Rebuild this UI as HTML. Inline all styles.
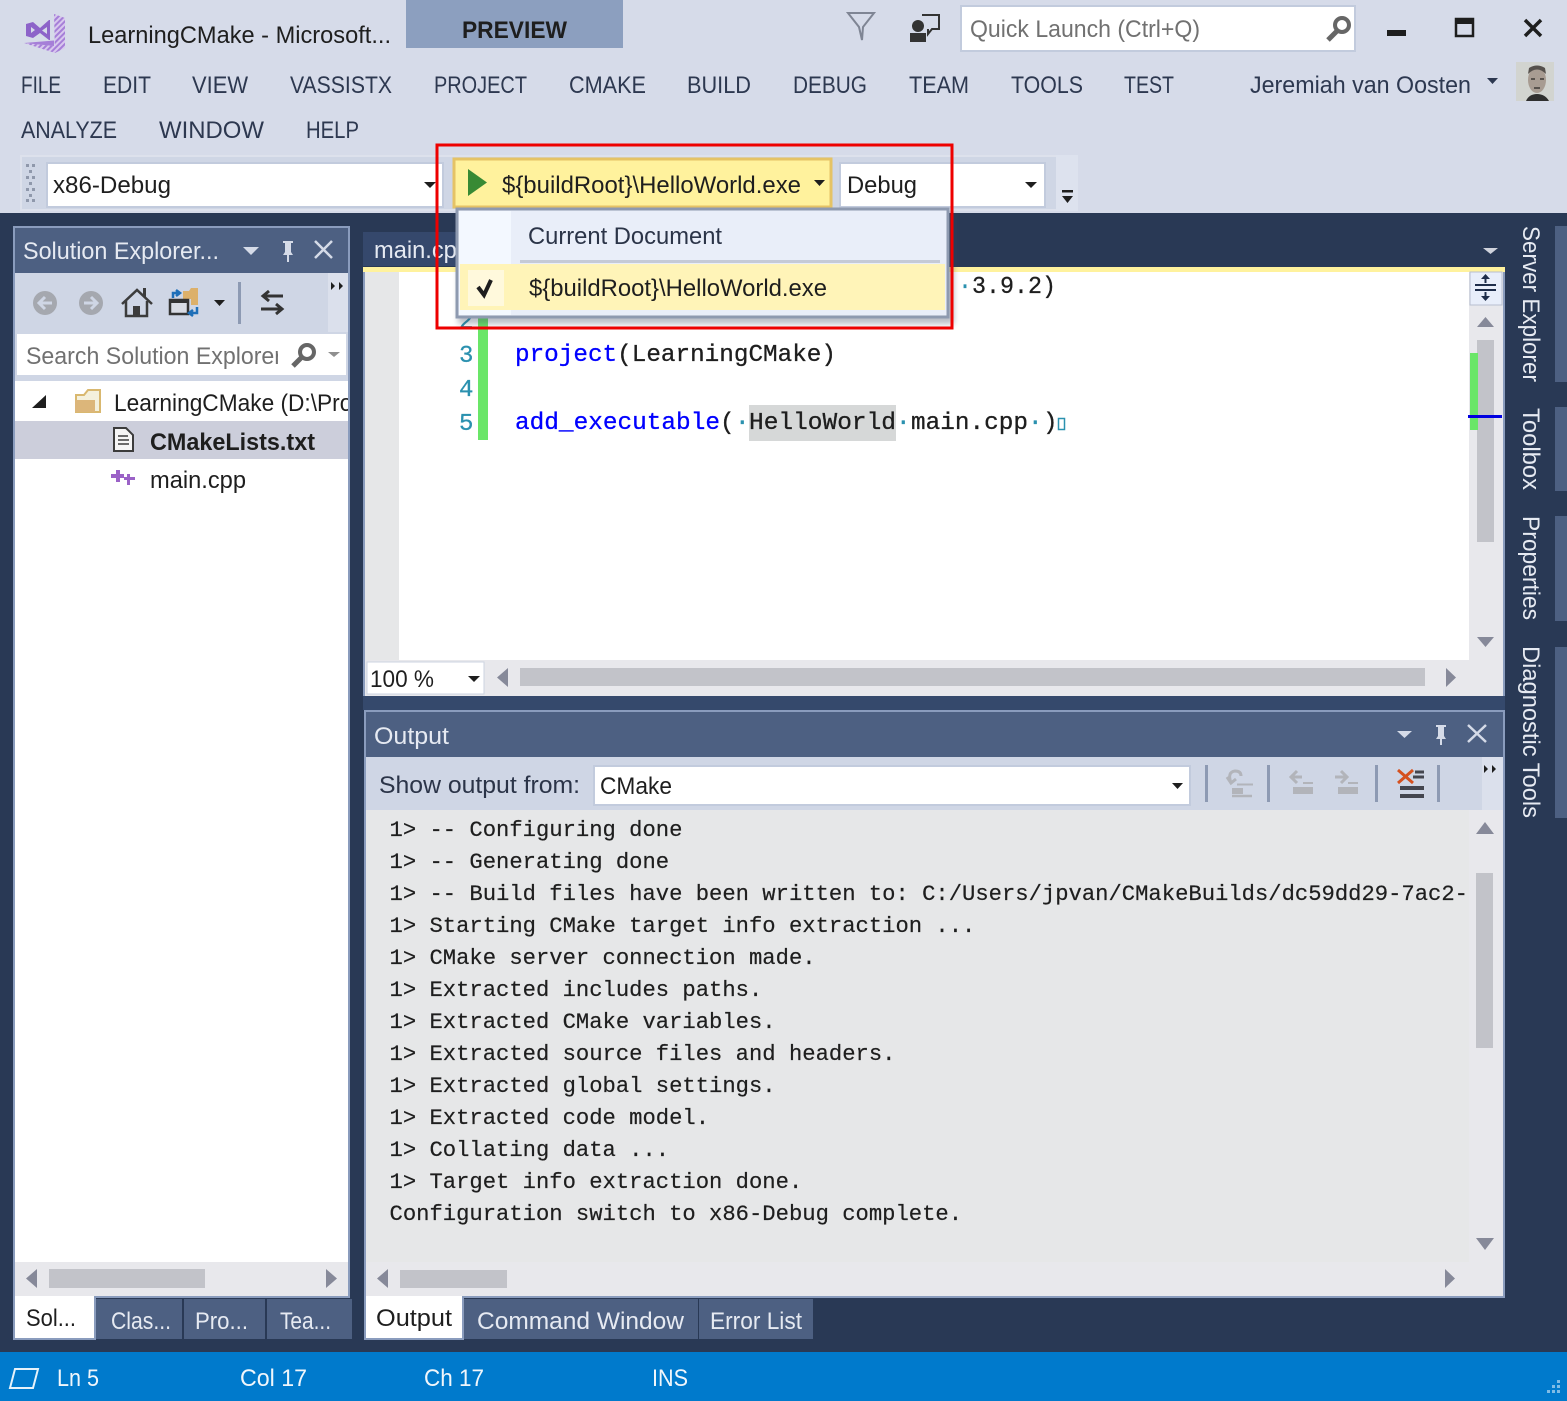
<!DOCTYPE html>
<html><head><meta charset="utf-8"><title>LearningCMake - Microsoft Visual Studio</title>
<style>
html,body{margin:0;padding:0;background:#293955}
svg{display:block;filter:blur(.35px)}
text{font-family:"Liberation Sans",sans-serif;font-size:24px;fill:#1e1e1e;white-space:pre}
.m{fill:#2d3850}
.w{fill:#e6eaf2}
.c{font-family:"Liberation Mono",monospace;font-size:24.3px;fill:#1e1e1e;stroke:#1e1e1e;stroke-width:.3px}
.o{font-family:"Liberation Mono",monospace;font-size:22.2px;fill:#1e1e1e;stroke:#1e1e1e;stroke-width:.2px}
.n{font-family:"Liberation Mono",monospace;font-size:24px;fill:#2b91af;stroke:#2b91af;stroke-width:.3px}
.kw{fill:#0000ff;stroke:#0000ff}
.d{fill:#2b91af;stroke:#2b91af}
.g{fill:#717171}
</style></head><body>
<svg width="1567" height="1401" viewBox="0 0 1567 1401" xmlns="http://www.w3.org/2000/svg">
<defs>
<clipPath id="oc"><rect x="366" y="810" width="1103" height="452"/></clipPath>
<clipPath id="tc"><rect x="15" y="381" width="333" height="40"/></clipPath>
<clipPath id="sc"><rect x="20" y="336" width="258" height="38"/></clipPath>
<filter id="sh" x="-5%" y="-5%" width="110%" height="120%"><feGaussianBlur stdDeviation="3"/></filter>
<pattern id="hat" width="4" height="4" patternUnits="userSpaceOnUse" patternTransform="rotate(45)"><rect width="4" height="4" fill="#d8c8ee"/><rect width="2" height="4" fill="#a67fd8"/></pattern>
</defs>

<rect width="1567" height="1401" fill="#293955"/>
<!-- top chrome -->
<rect width="1567" height="213" fill="#d6dbe9"/>
<!-- VS logo -->
<path fill-rule="evenodd" fill="#8d63c9" d="M26 24L33 22L40 28L49 20L50 20V40L49 40L40 33L33 38L26 36ZM31 27V33L35 30ZM42 30.500L47 34V27Z"/>
<path d="M54 14L65 18V48L55 53Z" fill="url(#hat)"/>
<path d="M24 43L55 46V53Z" fill="url(#hat)"/>
<path d="M24 43L54 40.500V46Z" fill="#a67fd8"/>
<text x="88" y="43" textLength="303" lengthAdjust="spacingAndGlyphs">LearningCMake - Microsoft...</text>
<rect x="406" y="0" width="217" height="48" fill="#8c9fbf"/>
<text x="462" y="38" textLength="105" lengthAdjust="spacingAndGlyphs" style="font-weight:bold">PREVIEW</text>
<path d="M848 13H874L863 27L862 40L859 27Z" fill="none" stroke="#7f8594" stroke-width="2"/>
<circle cx="918" cy="26" r="6" fill="#333"/><path d="M910 42v-9h16v9z" fill="#333"/>
<path d="M922 15h17v14h-7l-4 5v-5" fill="none" stroke="#333" stroke-width="2"/>
<rect x="961" y="6" width="394" height="45" fill="#fff" stroke="#c2cbdd" stroke-width="2"/>
<text class="g" x="970" y="37" textLength="230" lengthAdjust="spacingAndGlyphs">Quick Launch (Ctrl+Q)</text>
<circle cx="1342" cy="25" r="7" fill="none" stroke="#666" stroke-width="4"/><path d="M1337 31l-9 9" stroke="#666" stroke-width="5"/>
<rect x="1387" y="30" width="19" height="6" fill="#1e1e1e"/>
<rect x="1456" y="19" width="17" height="17" fill="none" stroke="#1e1e1e" stroke-width="2.500"/><rect x="1456" y="18" width="18" height="6" fill="#1e1e1e"/>
<path d="M1525 20l16 16M1541 20l-16 16" stroke="#1e1e1e" stroke-width="3.500"/>

<g class="menu">
<text class="m" x="21" y="93" textLength="40" lengthAdjust="spacingAndGlyphs">FILE</text>
<text class="m" x="103" y="93" textLength="48" lengthAdjust="spacingAndGlyphs">EDIT</text>
<text class="m" x="192" y="93" textLength="56" lengthAdjust="spacingAndGlyphs">VIEW</text>
<text class="m" x="290" y="93" textLength="102" lengthAdjust="spacingAndGlyphs">VASSISTX</text>
<text class="m" x="434" y="93" textLength="93" lengthAdjust="spacingAndGlyphs">PROJECT</text>
<text class="m" x="569" y="93" textLength="77" lengthAdjust="spacingAndGlyphs">CMAKE</text>
<text class="m" x="687" y="93" textLength="64" lengthAdjust="spacingAndGlyphs">BUILD</text>
<text class="m" x="793" y="93" textLength="74" lengthAdjust="spacingAndGlyphs">DEBUG</text>
<text class="m" x="909" y="93" textLength="60" lengthAdjust="spacingAndGlyphs">TEAM</text>
<text class="m" x="1011" y="93" textLength="72" lengthAdjust="spacingAndGlyphs">TOOLS</text>
<text class="m" x="1124" y="93" textLength="50" lengthAdjust="spacingAndGlyphs">TEST</text>
<text class="m" x="1250" y="93" textLength="221" lengthAdjust="spacingAndGlyphs">Jeremiah van Oosten</text>
<text class="m" x="21" y="138" textLength="96" lengthAdjust="spacingAndGlyphs">ANALYZE</text>
<text class="m" x="159" y="138" textLength="105" lengthAdjust="spacingAndGlyphs">WINDOW</text>
<text class="m" x="306" y="138" textLength="53" lengthAdjust="spacingAndGlyphs">HELP</text>
</g>
<path d="M1487 78h11l-5.500 6z" fill="#2d3850"/>
<!-- avatar -->
<rect x="1516" y="62" width="38" height="39" fill="#d2d4d0"/>
<ellipse cx="1537" cy="80" rx="9" ry="13" fill="#a89c92"/>
<path d="M1528 74q9-9 18 0l-1-6q-8-5-16 0z" fill="#55504c"/>
<path d="M1531 79h4M1540 79h4M1534 88h6" stroke="#3e3a36" stroke-width="1.500"/>
<path d="M1526 101q3-7 11-7t12 7z" fill="#2f2f2f"/>
<!-- toolbar -->
<rect x="20" y="155" width="1058" height="56" fill="#dde1ec"/>
<rect x="22" y="157" width="1034" height="52" fill="#cfd6e5"/>
<rect x="1056" y="155" width="22" height="56" fill="#dde2ee"/>
<g fill="#8f98ab"><rect x="26" y="164" width="3" height="3"/><rect x="32" y="164" width="3" height="3"/><rect x="29" y="170" width="3" height="3"/><rect x="26" y="176" width="3" height="3"/><rect x="32" y="176" width="3" height="3"/><rect x="29" y="182" width="3" height="3"/><rect x="26" y="188" width="3" height="3"/><rect x="32" y="188" width="3" height="3"/><rect x="29" y="194" width="3" height="3"/><rect x="26" y="199" width="3" height="3"/><rect x="32" y="199" width="3" height="3"/></g>
<rect x="47" y="163" width="396" height="44" fill="#fff" stroke="#c2cbdd" stroke-width="2"/>
<text x="53" y="193" textLength="118" lengthAdjust="spacingAndGlyphs">x86-Debug</text>
<path d="M424 182h12l-6 6z" fill="#1e1e1e"/>
<rect x="454" y="159" width="377" height="48" fill="#fff29d" stroke="#e5c365" stroke-width="3"/>
<path d="M468 169l19 13.500-19 13.500z" fill="#388a34"/>
<text x="502" y="193" textLength="299" lengthAdjust="spacingAndGlyphs">${buildRoot}\HelloWorld.exe</text>
<path d="M814 180h11l-5.500 6z" fill="#1e1e1e"/>
<rect x="840" y="163" width="205" height="44" fill="#fff" stroke="#c2cbdd" stroke-width="2"/>
<text x="847" y="193" textLength="70" lengthAdjust="spacingAndGlyphs">Debug</text>
<path d="M1025 182h12l-6 6z" fill="#1e1e1e"/>
<rect x="1062" y="190" width="11" height="2.500" fill="#1e1e1e"/><path d="M1062 196h11l-5.500 7z" fill="#1e1e1e"/>

<!-- dark bg -->
<rect x="0" y="213" width="1567" height="1139" fill="#293955"/>

<!-- solution explorer -->
<rect x="13" y="226" width="337" height="1072" fill="#8a9cbd"/>
<rect x="15" y="228" width="333" height="45" fill="#4d6082"/>
<text class="w" x="23" y="259" textLength="196" lengthAdjust="spacingAndGlyphs">Solution Explorer...</text>
<path d="M243 247h16l-8 8z" fill="#d5dbe8"/>
<path d="M283 241h10v2h-2v9l2 3h-10l2-3v-9h-2zM287 255h2v7h-2z" fill="#d5dbe8"/>
<path d="M315 241l17 17M332 241l-17 17" stroke="#d5dbe8" stroke-width="2.500"/>
<rect x="15" y="273" width="333" height="59" fill="#cfd6e5"/>
<rect x="328" y="273" width="20" height="59" fill="#dbe0ec"/>
<path d="M331 282l4 4-4 4zM339 282l4 4-4 4z" fill="#1e1e1e"/>
<circle cx="45" cy="303" r="12" fill="#a5a8af"/><path d="M52 303h-12M45 297l-6 6 6 6" stroke="#cfd6e5" stroke-width="3" fill="none"/>
<circle cx="91" cy="303" r="12" fill="#a5a8af"/><path d="M84 303h12M91 297l6 6-6 6" stroke="#cfd6e5" stroke-width="3" fill="none"/>
<path d="M122 304l15-14 15 14M126 301v15h21v-15" fill="none" stroke="#3c3c3c" stroke-width="2.500"/><rect x="133" y="306" width="7" height="10" fill="#3c3c3c"/><rect x="143" y="288" width="3" height="9" fill="#3c3c3c"/>
<path d="M183 291h6l2-3h7v17h-7v-6h-8z" fill="#dcb06a"/>
<rect x="170" y="300" width="18" height="14" fill="#d9dce4" stroke="#333" stroke-width="2.500"/><rect x="170" y="299" width="18" height="4" fill="#333"/>
<path d="M173 298v-5h5M176 290l4 3-4 3" fill="none" stroke="#1e6fb8" stroke-width="2.500"/><path d="M197 307v6h-6M193 310l-4 3 4 3" fill="none" stroke="#1e6fb8" stroke-width="2.500"/>
<path d="M214 300h11l-5.500 6z" fill="#1e1e1e"/>
<rect x="238" y="282" width="3" height="42" fill="#8d9ab3"/>
<path d="M283 296h-20M269 291l-6 5 6 5M261 309h21M276 304l6 5-6 5" fill="none" stroke="#333" stroke-width="3"/>
<rect x="15" y="332" width="333" height="49" fill="#cfd6e5"/>
<rect x="17" y="334" width="329" height="41" fill="#fff"/>
<text class="g" x="26" y="364" clip-path="url(#sc)" textLength="256" lengthAdjust="spacingAndGlyphs">Search Solution Explorer</text>
<circle cx="307" cy="352" r="7" fill="none" stroke="#666" stroke-width="4"/><path d="M301 358l-8 8" stroke="#666" stroke-width="5"/>
<path d="M328 352h12l-6 5z" fill="#8f8f8f"/>
<rect x="15" y="381" width="333" height="881" fill="#fff"/>
<path d="M46 395v13h-14z" fill="#1e1e1e"/>
<path d="M76 412v-17h8l4-5h12v22z" fill="#f4f0dc" stroke="#d9b86f" stroke-width="2"/><path d="M75 400h20v12h-20z" fill="#dcb67a"/>
<text x="114" y="411" clip-path="url(#tc)" textLength="285" lengthAdjust="spacingAndGlyphs">LearningCMake (D:\Projects</text>
<rect x="15" y="421" width="333" height="38" fill="#cccedb"/>
<path d="M114 428h12l7 7v16h-19z" fill="#f5f5f5" stroke="#3c3c3c" stroke-width="2"/><path d="M118 436h10M118 440h11M118 444h11" stroke="#3c3c3c" stroke-width="1.500"/>
<text x="150" y="450" textLength="165" lengthAdjust="spacingAndGlyphs" style="font-weight:bold">CMakeLists.txt</text>
<path d="M116 470h4v4h4v4h-4v4h-4v-4h-5v-4h5zM127 474h3v3h5v3h-5v5h-3v-5h-3v-3h3z" fill="#9b62c7"/>
<text x="150" y="488" textLength="96" lengthAdjust="spacingAndGlyphs">main.cpp</text>
<rect x="15" y="1262" width="333" height="34" fill="#e8e8ec"/>
<path d="M37 1269v19l-11-9.500z" fill="#868999"/>
<rect x="49" y="1269" width="156" height="19" fill="#c2c3c9"/>
<path d="M326 1269v19l11-9.500z" fill="#868999"/>
<rect x="13" y="1298" width="340" height="42" fill="#293955"/>
<rect x="13" y="1296" width="83" height="44" fill="#8a9cbd"/>
<rect x="15" y="1296" width="79" height="42" fill="#fff"/>
<text x="26" y="1326" textLength="50" lengthAdjust="spacingAndGlyphs">Sol...</text>
<rect x="96" y="1299" width="86" height="40" fill="#4d6082"/>
<text class="w" x="111" y="1329" textLength="60" lengthAdjust="spacingAndGlyphs">Clas...</text>
<rect x="184" y="1299" width="81" height="40" fill="#4d6082"/>
<text class="w" x="195" y="1329" textLength="53" lengthAdjust="spacingAndGlyphs">Pro...</text>
<rect x="267" y="1299" width="85" height="40" fill="#4d6082"/>
<text class="w" x="280" y="1329" textLength="51" lengthAdjust="spacingAndGlyphs">Tea...</text>

<!-- editor -->
<rect x="363" y="232" width="96" height="34" fill="#35486c"/>
<text class="w" x="374" y="258" textLength="96" lengthAdjust="spacingAndGlyphs">main.cpp</text>
<path d="M1483 248h15l-7.500 6z" fill="#cfd3dc"/>
<rect x="363" y="267" width="1142" height="5" fill="#fff29d"/>
<rect x="363" y="272" width="2" height="424" fill="#8a9cbd"/>
<rect x="1503" y="272" width="2" height="424" fill="#8a9cbd"/>
<rect x="365" y="272" width="1104" height="388" fill="#fff"/>
<rect x="365" y="272" width="34" height="388" fill="#e6e7e8"/>
<rect x="478" y="300" width="10" height="140" fill="#6ae668"/>
<text class="n" x="459" y="328">2</text>
<text class="n" x="459" y="362">3</text>
<text class="n" x="459" y="396">4</text>
<text class="n" x="459" y="430">5</text>
<rect x="749" y="405" width="147" height="36" fill="#d6d8d8"/>
<text class="c" x="958" y="293" textLength="98" lengthAdjust="spacingAndGlyphs"><tspan class="d">·</tspan>3.9.2)</text>
<text class="c" x="515" y="361" textLength="321" lengthAdjust="spacingAndGlyphs"><tspan class="kw">project</tspan>(LearningCMake)</text>
<text class="c kw" x="515" y="429" textLength="205" lengthAdjust="spacingAndGlyphs">add_executable</text>
<text class="c" x="720" y="429">(</text>
<text class="c d" x="735" y="429">·</text>
<text class="c" x="749" y="429" textLength="147" lengthAdjust="spacingAndGlyphs">HelloWorld</text>
<text class="c d" x="896" y="429">·</text>
<text class="c" x="911" y="429" textLength="117" lengthAdjust="spacingAndGlyphs">main.cpp</text>
<text class="c d" x="1028" y="429">·</text>
<text class="c" x="1043" y="429">)</text>
<rect x="1058.500" y="418.500" width="6" height="11" fill="none" stroke="#2b91af" stroke-width="1.500"/>
<!-- editor scroller -->
<rect x="1469" y="272" width="34" height="388" fill="#e8e8ec"/>
<rect x="1470" y="272" width="32" height="33" fill="#e8eefa" stroke="#b7bfd0" stroke-width="1"/>
<path d="M1475 285h21M1475 290h21" stroke="#1e2d4a" stroke-width="2"/><path d="M1485.500 275v8M1485.500 292v8" stroke="#1e2d4a" stroke-width="2"/><path d="M1481 279l4.500-5 4.500 5zM1481 296l4.500 5 4.500-5z" fill="#1e2d4a"/>
<path d="M1477 327h17l-8.500-10z" fill="#868999"/>
<rect x="1477" y="340" width="17" height="202" fill="#c2c3c9"/>
<rect x="1470" y="353" width="8" height="77" fill="#6ae668"/>
<rect x="1468" y="415" width="34" height="3" fill="#0000e0"/>
<path d="M1477 637h17l-8.500 10z" fill="#868999"/>
<!-- editor bottom -->
<rect x="365" y="660" width="1138" height="36" fill="#e8e8ec"/>
<rect x="367" y="662" width="117" height="32" fill="#fff" stroke="#cdd3e0" stroke-width="1"/>
<text x="370" y="687" textLength="64" lengthAdjust="spacingAndGlyphs">100 %</text>
<path d="M468 676h12l-6 6z" fill="#1e1e1e"/>
<path d="M508 668v19l-11-9.500z" fill="#868999"/>
<rect x="520" y="668" width="905" height="18" fill="#c2c3c9"/>
<path d="M1446 668v19l10-9.500z" fill="#868999"/>
<rect x="363" y="696" width="1142" height="14" fill="#35496c"/>

<!-- output -->
<rect x="364" y="710" width="1141" height="588" fill="#8a9cbd"/>
<rect x="366" y="712" width="1137" height="45" fill="#4d6082"/>
<text class="w" x="374" y="744" textLength="75" lengthAdjust="spacingAndGlyphs">Output</text>
<path d="M1397 731h15l-7.500 7z" fill="#d5dbe8"/>
<path d="M1436 725h10v2h-2v9l2 3h-10l2-3v-9h-2zM1440 739h2v6h-2z" fill="#d5dbe8"/>
<path d="M1468 725l18 17M1486 725l-18 17" stroke="#d5dbe8" stroke-width="2.500"/>
<rect x="366" y="757" width="1137" height="53" fill="#cfd6e5"/>
<rect x="1482" y="757" width="21" height="53" fill="#dbe0ec"/>
<path d="M1484 765l4 4-4 4zM1492 765l4 4-4 4z" fill="#1e1e1e"/>
<text x="379" y="793" textLength="201" lengthAdjust="spacingAndGlyphs" style="fill:#2b3448">Show output from:</text>
<rect x="594" y="766" width="596" height="39" fill="#fff" stroke="#c2cbdd" stroke-width="2"/>
<text x="600" y="794" textLength="72" lengthAdjust="spacingAndGlyphs">CMake</text>
<path d="M1172 783h11l-5.500 6z" fill="#1e1e1e"/>
<g fill="#8d9ab3"><rect x="1205" y="765" width="3" height="37"/><rect x="1267" y="765" width="3" height="37"/><rect x="1375" y="765" width="3" height="37"/><rect x="1437" y="765" width="3" height="37"/></g>
<g fill="none" stroke="#b2b4ba" stroke-width="3">
<path d="M1231 783q-4-11 4-12 6 0 6 5M1227 777l4 6 5-4"/>
<path d="M1237 784.500h16" stroke-width="2"/><path d="M1232 796h20" stroke-width="2.500"/>
<path d="M1302 777h-10M1297 771l-6 6 6 6"/><path d="M1303 783h10" stroke-width="2"/>
<path d="M1347 777h-12M1341 771l6 6-6 6"/><path d="M1348 783h10" stroke-width="2"/>
</g>
<rect x="1232" y="788" width="11" height="6" fill="#b2b4ba"/>
<rect x="1293" y="787" width="20" height="7" fill="#b2b4ba"/>
<rect x="1338" y="787" width="20" height="7" fill="#b2b4ba"/>
<g stroke="#44464f" fill="none"><path d="M1415 772h9M1413 777h11" stroke-width="3"/><path d="M1400 788h24M1400 796h24" stroke-width="4"/></g>
<path d="M1398 783l15-13M1398 770l15 13" stroke="#d5511f" stroke-width="3"/>
<rect x="366" y="810" width="1103" height="452" fill="#e6e7e8"/>
<g clip-path="url(#oc)">
<text class="o" x="389.500" y="836">1&gt; -- Configuring done</text>
<text class="o" x="389.500" y="868">1&gt; -- Generating done</text>
<text class="o" x="389.500" y="900">1&gt; -- Build files have been written to: C:/Users/jpvan/CMakeBuilds/dc59dd29-7ac2-</text>
<text class="o" x="389.500" y="932">1&gt; Starting CMake target info extraction ...</text>
<text class="o" x="389.500" y="964">1&gt; CMake server connection made.</text>
<text class="o" x="389.500" y="996">1&gt; Extracted includes paths.</text>
<text class="o" x="389.500" y="1028">1&gt; Extracted CMake variables.</text>
<text class="o" x="389.500" y="1060">1&gt; Extracted source files and headers.</text>
<text class="o" x="389.500" y="1092">1&gt; Extracted global settings.</text>
<text class="o" x="389.500" y="1124">1&gt; Extracted code model.</text>
<text class="o" x="389.500" y="1156">1&gt; Collating data ...</text>
<text class="o" x="389.500" y="1188">1&gt; Target info extraction done.</text>
<text class="o" x="389.500" y="1220">Configuration switch to x86-Debug complete.</text>
</g>
<rect x="1469" y="810" width="34" height="452" fill="#e8e8ec"/>
<path d="M1476 834h18l-9-12z" fill="#868999"/>
<rect x="1476" y="873" width="17" height="175" fill="#c2c3c9"/>
<path d="M1476 1238h18l-9 12z" fill="#868999"/>
<rect x="366" y="1262" width="1137" height="34" fill="#e8e8ec"/>
<path d="M388 1269v19l-11-9.500z" fill="#868999"/>
<rect x="400" y="1270" width="107" height="18" fill="#c2c3c9"/>
<path d="M1445 1269v19l10-9.500z" fill="#868999"/>
<rect x="353" y="1298" width="1214" height="54" fill="#293955"/>
<rect x="364" y="1296" width="100" height="44" fill="#8a9cbd"/>
<rect x="366" y="1296" width="96" height="42" fill="#fff"/>
<text x="376" y="1326" textLength="76" lengthAdjust="spacingAndGlyphs">Output</text>
<rect x="464" y="1299" width="234" height="40" fill="#4d6082"/>
<text class="w" x="477" y="1329" textLength="207" lengthAdjust="spacingAndGlyphs">Command Window</text>
<rect x="699" y="1299" width="114" height="40" fill="#4d6082"/>
<text class="w" x="710" y="1329" textLength="92" lengthAdjust="spacingAndGlyphs">Error List</text>

<!-- right side tabs -->
<rect x="1555" y="226" width="12" height="156" fill="#4d6082"/>
<rect x="1555" y="407" width="12" height="84" fill="#4d6082"/>
<rect x="1555" y="516" width="12" height="105" fill="#4d6082"/>
<rect x="1555" y="647" width="12" height="171" fill="#4d6082"/>
<g>
<text class="w" transform="translate(1523 226) rotate(90)" textLength="156" lengthAdjust="spacingAndGlyphs">Server Explorer</text>
<text class="w" transform="translate(1523 408) rotate(90)" textLength="82" lengthAdjust="spacingAndGlyphs">Toolbox</text>
<text class="w" transform="translate(1523 516) rotate(90)" textLength="104" lengthAdjust="spacingAndGlyphs">Properties</text>
<text class="w" transform="translate(1523 646) rotate(90)" textLength="172" lengthAdjust="spacingAndGlyphs">Diagnostic Tools</text>
</g>

<!-- dropdown -->
<rect x="458" y="214" width="496" height="110" fill="#3a4660" opacity=".35" filter="url(#sh)"/>
<rect x="457" y="209" width="491" height="108" fill="#e9eef9" stroke="#8e9ab0" stroke-width="3"/>
<rect x="459" y="211" width="52" height="104" fill="#f3f8ff"/>
<text x="528" y="244" textLength="194" lengthAdjust="spacingAndGlyphs" style="fill:#2b3448">Current Document</text>
<rect x="520" y="260" width="420" height="3" fill="#c5cad6"/>
<rect x="460" y="264" width="485" height="46" fill="#fff4b8"/>
<rect x="468" y="270" width="36" height="36" fill="#fff9dc"/>
<path d="M478 287l6 8 7-15" fill="none" stroke="#1e1e1e" stroke-width="4"/>
<text x="529" y="296" textLength="298" lengthAdjust="spacingAndGlyphs">${buildRoot}\HelloWorld.exe</text>

<!-- red callout -->
<rect x="437" y="145" width="515" height="183" fill="none" stroke="#ee0000" stroke-width="3"/>

<!-- status bar -->
<rect x="0" y="1352" width="1567" height="49" fill="#007acc"/>
<path d="M15 1369h23l-5 19h-23z" fill="none" stroke="#e6f2fa" stroke-width="2"/>
<text x="57" y="1386" textLength="42" lengthAdjust="spacingAndGlyphs" style="fill:#f0f6fb">Ln 5</text>
<text x="240" y="1386" textLength="67" lengthAdjust="spacingAndGlyphs" style="fill:#f0f6fb">Col 17</text>
<text x="424" y="1386" textLength="60" lengthAdjust="spacingAndGlyphs" style="fill:#f0f6fb">Ch 17</text>
<text x="652" y="1386" textLength="36" lengthAdjust="spacingAndGlyphs" style="fill:#f0f6fb">INS</text>
<g fill="#7fbce6"><rect x="1557" y="1380" width="3" height="3"/><rect x="1552" y="1385" width="3" height="3"/><rect x="1557" y="1385" width="3" height="3"/><rect x="1547" y="1390" width="3" height="3"/><rect x="1552" y="1390" width="3" height="3"/><rect x="1557" y="1390" width="3" height="3"/></g>
</svg>
</body></html>
